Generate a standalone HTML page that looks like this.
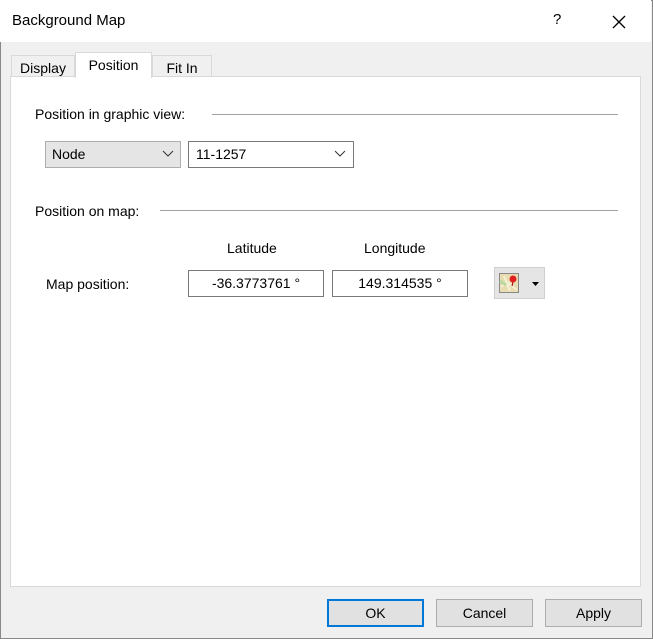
<!DOCTYPE html>
<html><head><style>
*{box-sizing:border-box;margin:0;padding:0}
body{width:653px;height:639px;background:#f0f0f0;font-family:"Liberation Sans",sans-serif;font-size:14px;color:#000;position:relative;overflow:hidden}
.win{position:absolute;left:0;top:0;width:653px;height:639px;border:1px solid #888}
.title{position:absolute;left:0;top:0;width:651px;height:42px;background:#fff}
.abs{position:absolute}
.tab{position:absolute;background:#f0f0f0;border:1px solid #d9d9d9;border-bottom:none;text-align:center}
.panel{position:absolute;left:10px;top:76px;width:631px;height:511px;background:#fff;border:1px solid #d9d9d9}
.line{position:absolute;height:1px;background:#a0a0a0}
.box{position:absolute;border:1px solid #7a7a7a;background:#fff}
.btn{position:absolute;top:599px;width:97px;height:28px;background:#e1e1e1;border:1px solid #adadad;text-align:center;line-height:26px}
</style></head><body>
<div class="win"></div>
<div class="title"></div>
<div class="abs" style="left:12px;top:12px;font-size:15px">Background Map</div>
<div class="abs" style="left:553px;top:11px;font-size:15px">?</div>
<svg class="abs" style="left:611px;top:14px" width="16" height="16"><path d="M2 2L14 14M14 2L2 14" stroke="#000" stroke-width="1.3"/></svg>
<div class="panel"></div>
<div class="tab" style="left:11px;top:55px;width:64px;height:21px;line-height:24px">Display</div>
<div class="tab" style="left:152px;top:55px;width:60px;height:21px;line-height:24px">Fit In</div>
<div class="tab" style="left:75px;top:52px;width:77px;height:26px;background:#fff;line-height:24px">Position</div>
<div class="abs" style="left:35px;top:106px">Position in graphic view:</div>
<div class="line" style="left:212px;top:114px;width:406px"></div>
<div class="box" style="left:45px;top:141px;width:136px;height:27px;background:#e5e5e5;border-color:#adadad;line-height:25px;padding-left:6px">Node</div>
<svg class="abs" style="left:162px;top:150px" width="12" height="8"><path d="M1 1L6 6L11 1" stroke="#333" fill="none"/></svg>
<div class="box" style="left:188px;top:141px;width:166px;height:27px;line-height:25px;padding-left:7px">11-1257</div>
<svg class="abs" style="left:334px;top:150px" width="12" height="8"><path d="M1 1L6 6L11 1" stroke="#333" fill="none"/></svg>
<div class="abs" style="left:35px;top:203px">Position on map:</div>
<div class="line" style="left:160px;top:210px;width:458px"></div>
<div class="abs" style="left:227px;top:240px">Latitude</div>
<div class="abs" style="left:364px;top:240px">Longitude</div>
<div class="abs" style="left:46px;top:276px">Map position:</div>
<div class="box" style="left:188px;top:270px;width:136px;height:27px;line-height:25px;text-align:center">-36.3773761 °</div>
<div class="box" style="left:332px;top:270px;width:136px;height:27px;line-height:25px;text-align:center">149.314535 °</div>
<div class="abs" style="left:494px;top:267px;width:51px;height:32px;background:#e5e5e5;border:1px solid #cfcfcf"></div>
<svg class="abs" style="left:499px;top:273px" width="20" height="20"><rect x="0.5" y="0.5" width="19" height="19" fill="#e8dcb0" stroke="#888"/><path d="M2 14L8 9L18 17M5 3L11 18" stroke="#f4f0d8" stroke-width="2" fill="none"/><path d="M1 8L7 12" stroke="#b8d8a0" stroke-width="3"/><circle cx="14" cy="6" r="3.5" fill="#e02020"/><path d="M14 9L13 13" stroke="#a00"/></svg>
<svg class="abs" style="left:532px;top:282px" width="7" height="4"><path d="M0 0H7L3.5 4Z" fill="#000"/></svg>
<div class="btn" style="left:327px;border:2px solid #0078d7;line-height:24px">OK</div>
<div class="btn" style="left:436px">Cancel</div>
<div class="btn" style="left:545px">Apply</div>
</body></html>
